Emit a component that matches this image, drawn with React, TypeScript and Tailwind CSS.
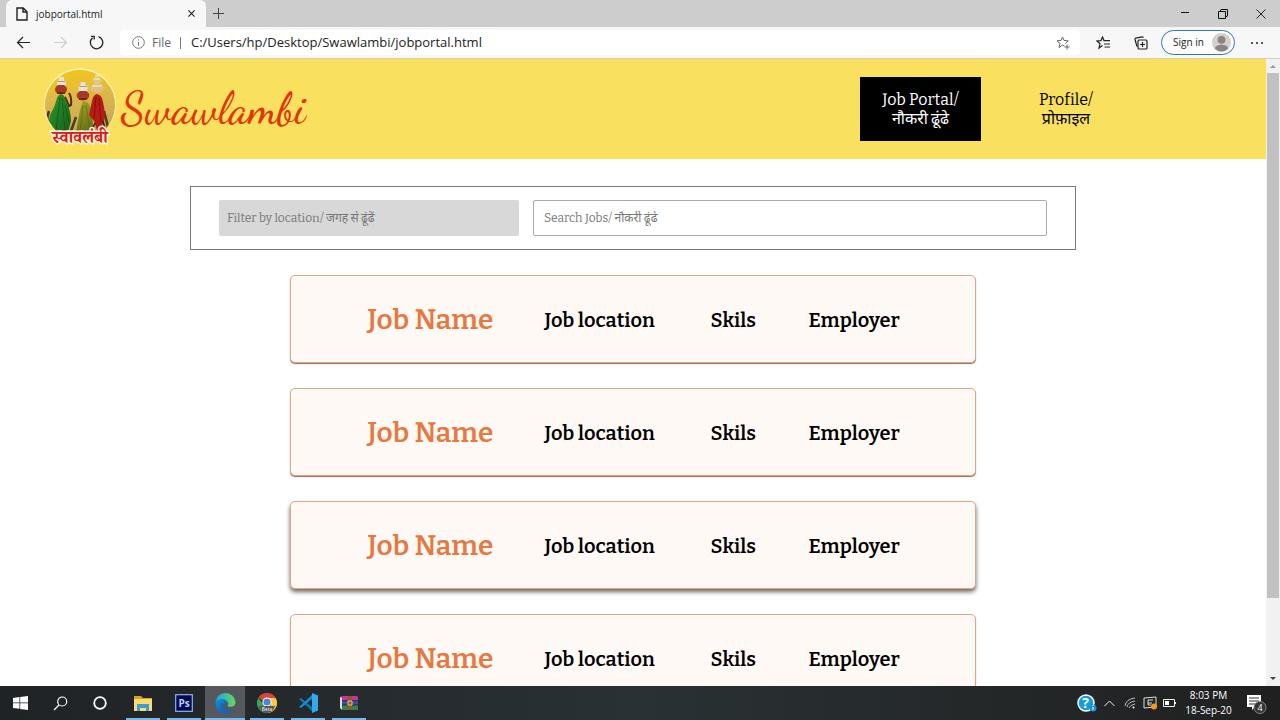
import React from "react";

const slab = "font-['Roboto_Slab','Bitter','DejaVu_Serif_Condensed','DejaVu_Serif','Noto_Sans_Devanagari','Noto_Sans',serif]";

function TabBar() {
  return (
    <div className="flex h-[27px] shrink-0 items-stretch bg-[#cdcdcd]">
      <div className="flex w-[206px] pl-[6px]">
        <div className="flex grow items-center rounded-t-md bg-[#f7f7f7] pl-[10px] pr-[7px]">
          <svg width="12" height="14" viewBox="0 0 12 14" fill="none" stroke="#222" strokeWidth="1.4" aria-hidden="true">
            <path d="M1 1h6.2L11 4.8V13H1zM7 1v4h4" />
          </svg>
          <span className="ml-2 grow text-[10px] leading-4 text-[#222]">jobportal.html</span>
          <button aria-label="Close tab" className="p-1">
            <svg width="7" height="7" viewBox="0 0 8 8" stroke="#222" strokeWidth="1.3"><path d="M.5.5l7 7M7.500.5l-7 7" /></svg>
          </button>
        </div>
      </div>
      <button aria-label="New tab" className="ml-[7px] flex items-center">
        <svg width="11" height="11" viewBox="0 0 11 11" stroke="#444" strokeWidth="1"><path d="M5.500 0v11M0 5.500h11" /></svg>
      </button>
      <div className="ml-auto flex items-center gap-[28px] pr-[14px]">
        <button aria-label="Minimize"><svg width="10" height="10" viewBox="0 0 10 10" stroke="#111"><path d="M1 3.500h8" /></svg></button>
        <button aria-label="Restore">
          <svg width="10" height="10" viewBox="0 0 10 10" fill="none" stroke="#111" strokeWidth="1"><path d="M.5 2.500h7v7h-7zM2 2.500L3 .5h6.500v6.500L7.500 8" /></svg>
        </button>
        <button aria-label="Close"><svg width="10" height="10" viewBox="0 0 10 10" stroke="#222"><path d="M.5.5l9 9M9.500.5l-9 9" /></svg></button>
      </div>
    </div>
  );
}

function Toolbar() {
  return (
    <div className="flex h-[32px] shrink-0 items-center border-b border-[#d5cfb4] bg-[#f7f7f7] pl-[16px] pr-[16px]">
      <button aria-label="Back">
        <svg width="15" height="13" viewBox="0 0 15 13" fill="none" stroke="#222" strokeWidth="1.200"><path d="M14 6.500H1.500M7 1L1.500 6.500 7 12" /></svg>
      </button>
      <button aria-label="Forward" className="ml-[22px]">
        <svg width="15" height="13" viewBox="0 0 15 13" fill="none" stroke="#ccc" strokeWidth="1.200"><path d="M1 6.500h12.500M8 1l5.500 5.500L8 12" /></svg>
      </button>
      <button aria-label="Refresh" className="ml-[21px]">
        <svg width="15" height="15" viewBox="0 0 15 15" fill="none" stroke="#222" strokeWidth="1.300"><path d="M9.500 1.700A6.200 6.200 0 1 1 3.600 2.800M2 1.300h3.200v3.300" /></svg>
      </button>
      <div className="ml-[16px] flex h-[25px] grow items-center rounded bg-white pl-[12px] pr-[10px] text-[12px]">
        <svg width="13" height="13" viewBox="0 0 13 13" fill="none" stroke="#777" aria-hidden="true"><circle cx="6.500" cy="6.500" r="5.800" /><path d="M6.500 5.800v4M6.500 3.300v1.200" /></svg>
        <span className="ml-[7px] text-[#666]">File</span>
        <span className="ml-[9px] h-3 w-px bg-[#777]" />
        <input aria-label="Address" readOnly defaultValue="C:/Users/hp/Desktop/Swawlambi/jobportal.html" className="ml-[10px] min-w-0 grow bg-transparent text-[13px] text-[#222] outline-none" />
        <button aria-label="Add to favorites">
          <svg width="14" height="14" viewBox="0 0 14 14" fill="none" stroke="#666"><path d="M8.500 10L6.500 9 3 11.500l1-4.200L1 4.800l4-.4L6.500 1 8 4.400l4.200.4-2.800 2.600M11 8.500v5M8.500 11h5" /></svg>
        </button>
      </div>
      <button aria-label="Favorites" className="ml-[16px]">
        <svg width="15" height="14" viewBox="0 0 15 14" fill="none" stroke="#222" strokeWidth="1.200"><path d="M6.500 9.500L3 12l1-4.200L1 5l4-.4L6.500 1 8 4.600h6M8 8h6M8.500 11H14" /></svg>
      </button>
      <button aria-label="Collections" className="ml-[23px]">
        <svg width="14" height="14" viewBox="0 0 14 14" fill="none" stroke="#222" strokeWidth="1.200"><rect x="4" y="4" width="9" height="9" rx="1" /><path d="M8.500 6v5M6 8.500h5M3 10.500L1 3.500c-.2-.8.2-1.200.8-1.400L8 .9c.8-.1 1 .2 1.200 1" /></svg>
      </button>
      <button className="ml-[13px] flex h-[25px] w-[74px] items-center justify-between rounded-full border border-[#2f78c0] bg-[#fcfcfc] pl-[11px] pr-[3px] text-[10px] text-[#222]">
        Sign in
        <svg width="19" height="19" viewBox="0 0 19 19" aria-hidden="true"><circle cx="9.500" cy="9.500" r="9.500" fill="#d4d0cd" /><circle cx="9.500" cy="6.800" r="3.900" fill="#8a8583" /><path d="M3 15.500c0-5 13-5 13 0-3 4-10 4-13 0z" fill="#8a8583" /></svg>
      </button>
      <button aria-label="Settings and more" className="ml-[15px]">
        <svg width="14" height="4" viewBox="0 0 14 4" fill="#222"><circle cx="2" cy="2" r="1" /><circle cx="7" cy="2" r="1" /><circle cx="12" cy="2" r="1" /></svg>
      </button>
    </div>
  );
}

function Logo() {
  return (
    <svg width="74" height="90" viewBox="0 -3 74 90" role="img" aria-label="स्वावलंबी">
      <defs>
        <clipPath id="disc"><path d="M15 65A35 35 0 1 1 59 65z" /></clipPath>
        <linearGradient id="sky" x1="0.300" y1="0" x2="0.500" y2="1">
          <stop offset="0" stopColor="#f0c814" /><stop offset="0.350" stopColor="#e6bc3a" /><stop offset="0.700" stopColor="#c9a64a" /><stop offset="1" stopColor="#8f7a30" />
        </linearGradient>
        <linearGradient id="sari" x1="0" y1="0" x2="1" y2="1"><stop stopColor="#2f9a2c" /><stop offset="1" stopColor="#17601a" /></linearGradient>
        <linearGradient id="olive" x1="0" y1="0" x2="0.300" y2="1"><stop stopColor="#a3a528" /><stop offset="1" stopColor="#6d7414" /></linearGradient>
      </defs>
      <path d="M14 65A36 36 0 1 1 60 65z" fill="#fff3b5" />
      <g clipPath="url(#disc)">
        <rect width="74" height="74" fill="url(#sky)" />
        <path d="M2 28q10-4 14 6t12-4 10 12 20-8 16 4v30H2z" fill="#d9b85e" opacity=".5" />
        <path d="M6 44q-3 8-1 18h8M33 50l-5 14M61 44l4 16-2 6" fill="none" stroke="#4a3a22" strokeWidth="2.500" />
        <path d="M22 30l4 9M26 26q3 5 2 12l-6 3" fill="none" stroke="#4f2b22" strokeWidth="2" />
        <path d="M18 27q4 1 5 7 5 10 5 20l-3 11H9Q4 60 7 48q5-8 7-17 1-3 4-4z" fill="url(#sari)" />
        <path d="M40 34q6 0 8 8l3 23H33l4-22z" fill="url(#olive)" />
        <path d="M54 27q5 1 6 8 3 12 1 20l-6 11-4-12-5-6 3-14q1-6 5-7z" fill="#b81a14" />
        <path d="M17 30l-4 34M19 31l3 33M22 38l4 18" fill="none" stroke="#0f4a14" opacity=".6" />
        <path d="M40 38l-3 26M43 38l4 26" fill="none" stroke="#5a6110" opacity=".6" />
        <path d="M53 30l-2 22M56 31l2 24" fill="none" stroke="#700c0c" opacity=".7" />
        <path d="M52 56l-4 9M60 54l3 11" stroke="#33231a" strokeWidth="1.500" />
        <ellipse cx="18" cy="22.500" rx="6" ry="5" fill="#a53a26" /><ellipse cx="40" cy="28.500" rx="6.300" ry="5" fill="#a53a26" />
        <path d="M14 26h8M36 32h8" stroke="#7a2418" strokeWidth="2" />
        <path d="M14 18v-3l2-2v-3h5v3l2 2v3zM35.500 24v-4l2-2v-3h5v3l2 2v4z" fill="#e9e2d6" />
        <path d="M15 14.500h7M36.500 19.500h7" stroke="#a79a8e" />
        <ellipse cx="54" cy="21" rx="6.500" ry="4.500" fill="#dcc08a" /><ellipse cx="54" cy="13.500" rx="4.500" ry="4" fill="#e2c679" />
        <path d="M49 19h10M51 12h6M52 9h4" stroke="#f3e4b8" strokeWidth="1.300" />
      </g>
      <text x="37" y="76" textAnchor="middle" fontSize="17" fontWeight="700" fill="#d71d20" stroke="#fff6dc" strokeWidth="3" paintOrder="stroke" className="font-['Noto_Serif_Devanagari','Noto_Sans_Devanagari','Noto_Sans',serif]">स्वावलंबी</text>
    </svg>
  );
}

function SiteHeader() {
  return (
    <header className="flex h-[100px] items-center bg-[#f9e05f]">
      <a href="#home" className="ml-[43px] flex items-center gap-1">
        <Logo />
        <span className="font-['Dancing_Script','Liberation_Serif',cursive] text-[44px] leading-[54px] font-medium text-[#e33408]">Swawlambi</span>
      </a>
      <nav className={`ml-auto mr-[138px] flex items-center gap-[23px] text-center text-[16px] leading-[19px] ${slab}`}>
        <a href="#jobs" className="flex h-[64px] w-[121px] items-center justify-center bg-black text-white">
          <span>Job Portal/<br />नौकरी ढूंढे</span>
        </a>
        <a href="#profile" className="flex h-[64px] w-[124px] items-center justify-center text-black">
          <span>Profile/<br />प्रोफ़ाइल</span>
        </a>
      </nav>
    </header>
  );
}

const jobs = [{ lifted: false }, { lifted: false }, { lifted: true }, { lifted: false }];

function JobCard({ lifted }: { lifted: boolean }) {
  return (
    <article
      className={`grid h-[88px] w-[686px] max-w-full shrink-0 grid-cols-[126px_115px_47px_90px] items-center justify-center gap-[51px] rounded-[5px] border border-[#e5a582] bg-[#fff9f6] pt-px font-semibold whitespace-nowrap text-black ${
        lifted ? "shadow-[0_3px_4px_0_#766963]" : "shadow-[0_1px_1px_0_#8f6a5c]"
      }`}
    >
      <h2 className="text-[28px] leading-8 text-[#e67840]">Job Name</h2>
      <p className="text-[20px] leading-6">Job location</p>
      <p className="text-[20px] leading-6">Skils</p>
      <p className="text-[20px] leading-6">Employer</p>
    </article>
  );
}

function Scrollbar() {
  return (
    <div className="flex w-[14px] shrink-0 flex-col items-center bg-[#f1f1f1]" aria-hidden="true">
      <svg width="14" height="14" viewBox="0 0 14 14" fill="#999"><path d="M4 9h6L7 6z" /></svg>
      <div className="w-[12px] grow-[526] bg-[#c1c1c1]" />
      <div className="grow-[74]" />
      <svg width="14" height="14" viewBox="0 0 14 14" fill="#444"><path d="M4 5h6L7 8z" /></svg>
    </div>
  );
}

function Page() {
  return (
    <div className="flex min-h-0 grow">
      <div className="min-w-0 grow overflow-hidden bg-white">
        <SiteHeader />
        <main className={`flex flex-col items-center ${slab}`}>
          <form className="mt-[27px] flex h-[64px] w-[70%] items-center gap-[14px] border-[1px] border-[#777] px-[28px] text-[12px]">
            <input aria-label="Filter by location" placeholder="Filter by location/ जगह से ढूंढें" className="h-[36px] w-[300px] shrink-0 rounded-[2px] bg-[#d8d8d8] px-2 placeholder:text-[#777]" />
            <input aria-label="Search jobs" placeholder="Search Jobs/ नौकरी ढूंढे" className="h-[36px] min-w-0 grow rounded-[2px] border border-[#aaa] px-[10px] placeholder:text-[#777]" />
          </form>
          <section className="mt-[25px] flex w-full flex-col items-center gap-[25px]">
            {jobs.map((job, i) => <JobCard key={i} lifted={job.lifted} />)}
          </section>
        </main>
      </div>
      <Scrollbar />
    </div>
  );
}

function TaskButton({ label, running, active, children }: { label: string; running?: boolean; active?: boolean; children: React.ReactNode }) {
  return (
    <button aria-label={label} className={`flex h-full w-[40px] items-center justify-center ${active ? "bg-[#55585c]" : ""} ${running ? "border-b-2 border-[#76b9ed] pt-[2px]" : ""}`}>
      {children}
    </button>
  );
}

function Taskbar() {
  return (
    <footer className="flex h-[34px] shrink-0 items-center bg-linear-to-r from-[#202326] via-[#293134] to-[#202020] text-white">
      <div className="flex h-full">
        <TaskButton label="Start"><svg width="15" height="14" viewBox="0 0 15 14" fill="#fff"><path d="M0 2l6.500-1v5.500H0zM7.200.9L15 0v6.500H7.200zM0 7.200h6.500v5.600L0 12zM7.200 7.200H15V14l-7.800-1z" /></svg></TaskButton>
        <TaskButton label="Search"><svg width="15" height="15" viewBox="0 0 15 15" fill="none" stroke="#fff" strokeWidth="1.200"><circle cx="9.200" cy="5.500" r="4.500" /><path d="M6 9l-5 5" /></svg></TaskButton>
        <TaskButton label="Cortana"><svg width="14" height="14" viewBox="0 0 14 14" fill="none" stroke="#fff" strokeWidth="1.800"><circle cx="7" cy="7" r="5.800" /></svg></TaskButton>
      </div>
      <div className="ml-[6px] flex h-full gap-[7px]">
        <span className="flex h-full w-[34px]"><TaskButton label="File Explorer" running>
          <svg width="20" height="17" viewBox="0 0 20 17"><path d="M1 1h7l2 2h9v13H1z" fill="#d7a126" /><path d="M1 4h18v12H1z" fill="#ffda6c" /><path d="M4 16V9h12v7h-3v-3H7v3z" fill="#3a9fd8" /></svg>
        </TaskButton></span>
        <span className="flex h-full w-[34px]"><TaskButton label="Photoshop" running>
          <svg width="18" height="18" viewBox="0 0 18 18"><rect x=".7" y=".7" width="16.600" height="16.600" fill="#00094f" stroke="#8eb5f5" strokeWidth="1.200" /><text x="9" y="12.500" textAnchor="middle" fontSize="10" fontWeight="700" fill="#b9d1ff" fontFamily="Open Sans">Ps</text></svg>
        </TaskButton></span>
      </div>
      <div className="ml-[4px] flex h-full">
        <TaskButton label="Edge" running active>
          <svg width="21" height="21" viewBox="0 0 21 21">
            <defs><linearGradient id="edgeTop"><stop stopColor="#1ba7dd" /><stop offset="1" stopColor="#68d85a" /></linearGradient><linearGradient id="edgeLow" x1="0" y1="0" x2="1" y2="1"><stop stopColor="#138fe0" /><stop offset="1" stopColor="#0b52a4" /></linearGradient></defs>
            <path d="M.6 9A10 10 0 0 1 20.500 9c.2 3.500-2.500 5-5 5-3 0-3.500-1.500-2.500-2.500C15 8 6 4 .6 9z" fill="url(#edgeTop)" />
            <path d="M.6 9C4 4.500 12 5.500 13 10c-2-2-5.500 0-5 3 .6 3.500 5 6 10.500 3.500A10 10 0 0 1 .6 9z" fill="url(#edgeLow)" />
            <path d="M8 10c-5 4-1 10 4 10.300 3 0 5-1.500 6.500-3.800C12 19 8 15 8 12z" fill="#1467b8" />
          </svg>
        </TaskButton>
      </div>
      <div className="ml-[5px] flex h-full gap-[7px]">
        <span className="flex h-full w-[34px]"><TaskButton label="Chrome Beta" running>
          <svg width="20" height="20" viewBox="0 0 20 20"><path d="M1.300 5A10 10 0 0 1 18.700 5L10 10z" fill="#dc4437" /><path d="M1.300 5A10 10 0 0 0 10 20l4-8-6 1z" fill="#38a458" /><path d="M18.700 5A10 10 0 0 1 10 20l4-8-2-7z" fill="#f5c944" /><circle cx="10" cy="9" r="4.600" fill="#fff" /><circle cx="10" cy="9" r="3.600" fill="#4e84dc" /><path d="M2 13h16q-2 7-8 7t-8-7z" fill="#555" /><text x="10" y="17.500" textAnchor="middle" fontSize="5" fill="#fff" fontFamily="Open Sans">Beta</text></svg>
        </TaskButton></span>
        <span className="flex h-full w-[34px]"><TaskButton label="Visual Studio Code" running>
          <svg width="20" height="20" viewBox="0 0 20 20"><path d="M1 6l2-1 12 10v4z" fill="#0879bd" /><path d="M1 14l2 1L15 5V1z" fill="#168bd0" /><path d="M14 0l6 2.500v15L14 20z" fill="#35a9ee" /></svg>
        </TaskButton></span>
        <span className="flex h-full w-[34px]"><TaskButton label="WinRAR" running>
          <svg width="18" height="15" viewBox="0 0 18 15"><path d="M0 1l2-1h15l1 1v4H2z" fill="#c4388c" /><path d="M2 5h16v4H2z" fill="#3c4bb5" /><path d="M2 9h16v5H2z" fill="#30844c" /><path d="M2 4.800h16M2 9h16" stroke="#222" strokeWidth=".8" /><path d="M0 1l2 1v12l-2-2z" fill="#ddd" /><path d="M8 0h4v14H8z" fill="#8b5635" /><path d="M8 5h4v4H8z" fill="none" stroke="#edc75b" /></svg>
        </TaskButton></span>
      </div>
      <div className="ml-auto flex items-center pr-[13px]">
        <svg width="20" height="18" viewBox="0 0 20 18" role="img" aria-label="Help"><circle cx="9" cy="9" r="8" fill="#149dd6" stroke="#fff" strokeWidth="1.500" /><text x="8.500" y="14" textAnchor="middle" fontSize="14" fontWeight="700" fill="#fff" fontFamily="Open Sans">?</text><circle cx="16" cy="14" r="3.500" fill="#1692d2" /><path d="M16 13v3M16 11v1" stroke="#fff" /></svg>
        <svg className="ml-[7px]" width="11" height="7" viewBox="0 0 11 7" fill="none" stroke="#eee"><path d="M.5 6l5-5 5 5" /></svg>
        <svg className="ml-[9px]" width="12" height="12" viewBox="0 0 12 12" fill="none" stroke="#bbb"><path d="M1 9Q2 2 11 1M3 10Q4 5 11 4M5 11Q6 8 11 7" /><circle cx="9.500" cy="10.500" r="1" fill="#fff" stroke="none" /></svg>
        <svg className="ml-[7px]" width="15" height="14" viewBox="0 0 15 14" fill="none" stroke="#ddd"><path d="M1 2l12-1v10L1 12zM5 9V4h5M5 7h4M5 9h3" /><circle cx="11" cy="10.500" r="3" fill="#f49b13" stroke="none" /></svg>
        <svg className="ml-[5px]" width="13" height="8" viewBox="0 0 13 8" fill="none" stroke="#eee"><path d="M.5.5h11v7H.5zM12.500 3v2" /><path d="M2 2h4v4H2z" fill="#fff" stroke="none" /></svg>
        <div className="mr-[14px] ml-[9px] w-[47px] text-center text-[10px] leading-[15px] whitespace-nowrap"><p>8:03 PM</p><p>18-Sep-20</p></div>
        <svg width="21" height="22" viewBox="0 0 21 22" role="img" aria-label="4 notifications"><path d="M1 3h14v12H9l-3 3v-3H1z" fill="#fff" /><path d="M3 6h10M3 9h10M3 12h6" stroke="#333" /><circle cx="14" cy="15.500" r="6" fill="#333" stroke="#888" /><text x="14" y="19" textAnchor="middle" fontSize="9" fill="#fff" fontFamily="Open Sans">4</text></svg>
      </div>
    </footer>
  );
}

export default function App() {
  return (
    <div className="flex h-screen flex-col overflow-hidden font-['Open_Sans','Noto_Sans',sans-serif]">
      <TabBar />
      <Toolbar />
      <Page />
      <Taskbar />
    </div>
  );
}
